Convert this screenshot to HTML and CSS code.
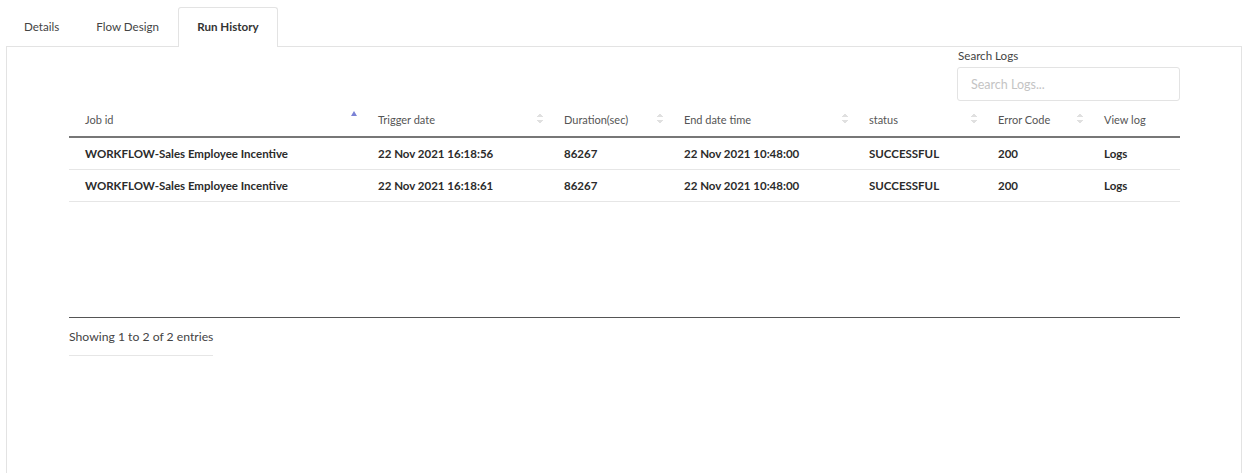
FILE: index.html
```html
<!DOCTYPE html>
<html lang="en">

<head>
    <meta charset="UTF-8">
    <title>Run History</title>
    <link rel="stylesheet" href="styles.css">
</head>

<body>
    <ul class="tabs">
        <li>Details</li>
        <li>Flow Design</li>
        <li class="active">Run History</li>
    </ul>
    <div class="panel">
        <div class="search">
            <label for="q">Search Logs</label>
            <input id="q" type="text" placeholder="Search Logs...">
        </div>
        <table class="logs">
            <colgroup>
                <col style="width:293px">
                <col style="width:186px">
                <col style="width:120px">
                <col style="width:185px">
                <col style="width:129px">
                <col style="width:106px">
                <col>
            </colgroup>
            <thead>
                <tr>
                    <th class="sort asc">Job id</th>
                    <th class="sort">Trigger date</th>
                    <th class="sort">Duration(sec)</th>
                    <th class="sort">End date time</th>
                    <th class="sort">status</th>
                    <th class="sort">Error Code</th>
                    <th>View log</th>
                </tr>
            </thead>
            <tbody>
                <tr>
                    <td>WORKFLOW-Sales Employee Incentive</td>
                    <td>22 Nov 2021 16:18:56</td>
                    <td>86267</td>
                    <td>22 Nov 2021 10:48:00</td>
                    <td>SUCCESSFUL</td>
                    <td>200</td>
                    <td>Logs</td>
                </tr>
                <tr>
                    <td>WORKFLOW-Sales Employee Incentive</td>
                    <td>22 Nov 2021 16:18:61</td>
                    <td>86267</td>
                    <td>22 Nov 2021 10:48:00</td>
                    <td>SUCCESSFUL</td>
                    <td>200</td>
                    <td>Logs</td>
                </tr>
            </tbody>
        </table>
        <div class="foot">
            <div class="info">Showing 1 to 2 of 2 entries</div>
        </div>
    </div>
</body>

</html>
```

FILE: styles.css
```css
* {
    padding: 0;
    margin: 0;
    box-sizing: border-box;
}

body {
    font-family: Lato, "Open Sans", sans-serif;
    color: #333;
    background: #fff;
    padding: 7px 7px 0 6px;
}

.tabs {
    display: flex;
    list-style: none;
    height: 39px;
    padding-left: 0;
}

.tabs li {
    font-size: 11.6px;
    color: #444;
    padding: 13px 18px 0;
    height: 39px;
}

.tabs li:nth-child(2) {
    padding-left: 19px;
}

.tabs li.active {
    border: 1px solid #e3e3e3;
    border-bottom: none;
    border-radius: 3px 3px 0 0;
    background: #fff;
    font-weight: bold;
    color: #333;
    width: 100px;
    height: 40px;
    padding: 12px 0 0;
    text-align: center;
    margin-left: 1px;
    position: relative;
    z-index: 1;
}

.panel {
    border: 1px solid #e3e3e3;
    height: 430px;
    padding: 0 61px 0 62px;
}

.search {
    width: 223px;
    margin-left: auto;
}

.search label {
    display: block;
    font-size: 11.6px;
    color: #444;
    height: 20px;
    padding: 2px 0 0 1px;
}

.search input {
    display: block;
    width: 223px;
    height: 34px;
    border: 1px solid #e3e3e3;
    border-radius: 3px;
    padding: 0 13px;
    font-family: inherit;
    font-size: 12.5px;
    color: #333;
}

.search input::placeholder {
    color: #c4c4c4;
}

.logs {
    width: 100%;
    border-collapse: collapse;
    table-layout: fixed;
    margin-top: 2px;
    font-size: 11.5px;
}

.logs th {
    text-align: left;
    font-weight: normal;
    font-size: 11px;
    color: #555;
    height: 34px;
    padding: 0 16px;
    border-bottom: 2px solid #777;
    position: relative;
}

.logs td {
    height: 32px;
    padding: 0 16px;
    border-bottom: 1px solid #e6e6e6;
    font-weight: bold;
    color: #2b2b2b;
    white-space: nowrap;
}

.sort::after {
    content: "";
    position: absolute;
    right: 5px;
    top: 10px;
    width: 6px;
    height: 13px;
    background:
        linear-gradient(to top left, #e0e0e0 50%, transparent 50%) left 0 / 3px 4px no-repeat,
        linear-gradient(to top right, #e0e0e0 50%, transparent 50%) right 0 / 3px 4px no-repeat,
        linear-gradient(to bottom left, #e0e0e0 50%, transparent 50%) left 7px / 3px 4px no-repeat,
        linear-gradient(to bottom right, #e0e0e0 50%, transparent 50%) right 7px / 3px 4px no-repeat;
}

.sort.asc::after {
    top: 8px;
    width: 0;
    height: 0;
    background: none;
    border-left: 3px solid transparent;
    border-right: 3px solid transparent;
    border-bottom: 5px solid #7b82d6;
}

.foot {
    margin-top: 115px;
    border-top: 1px solid #555;
}

.info {
    display: inline-block;
    font-size: 12.2px;
    color: #444;
    padding: 11px 0 11px;
    border-bottom: 1px solid #e6e6e6;
}
```
